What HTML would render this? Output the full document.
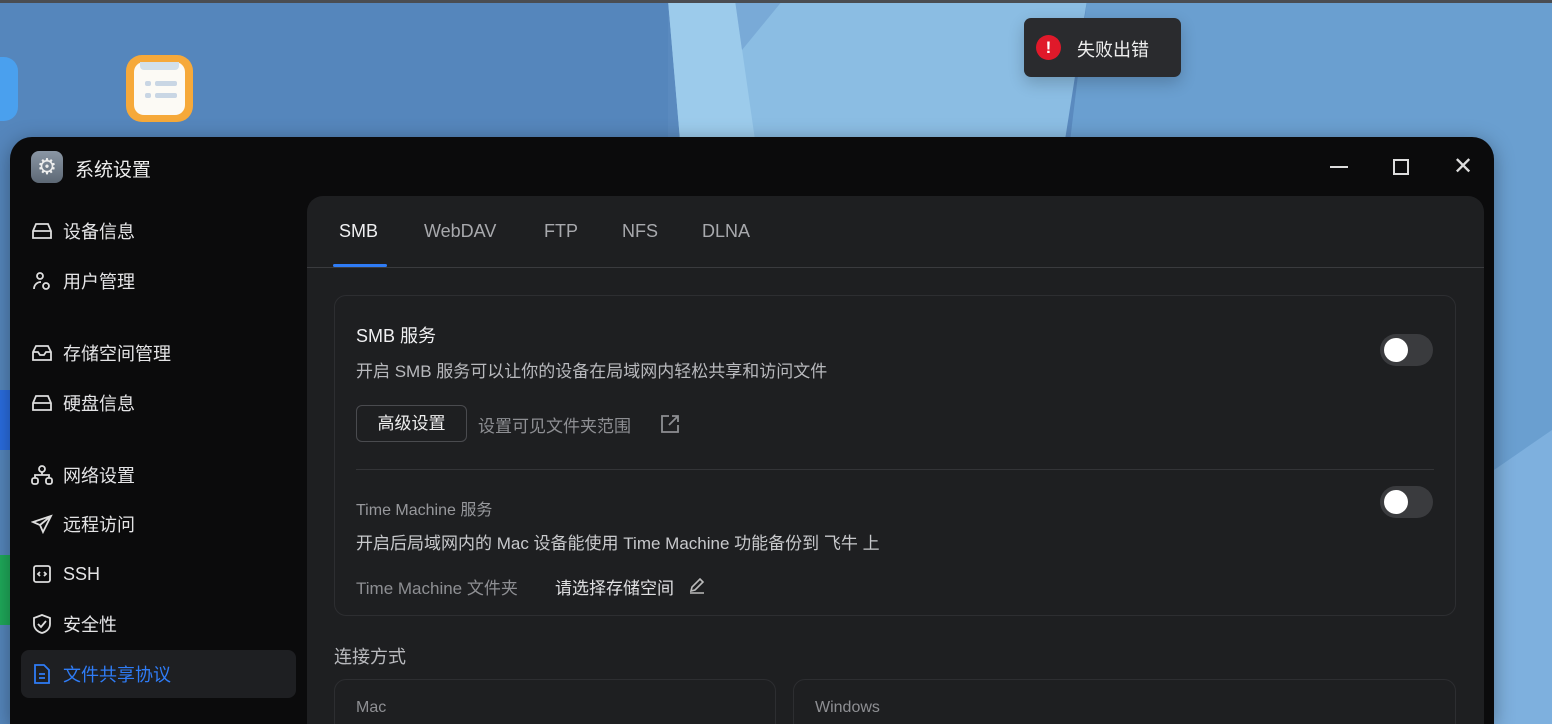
<!DOCTYPE html>
<html><head><meta charset="utf-8"><style>
*{margin:0;padding:0;box-sizing:border-box}
html,body{width:1552px;height:724px;overflow:hidden}
body{position:relative;font-family:"Liberation Sans","Noto Sans CJK SC",sans-serif;background:#5a88bb}
.abs{position:absolute}
.win{left:10px;top:137px;width:1484px;height:587px;background:#0b0b0c;border-radius:22px 22px 0 0;box-shadow:0 4px 20px rgba(0,0,0,.35)}
.nav{position:absolute;left:21px;height:48px;width:275px;display:flex;align-items:center;color:#e4e4e6;font-size:18px}
.nav svg{margin:0 10px 0 10px}
.panel{left:307px;top:196px;width:1177px;height:528px;background:#1e1f21;border-radius:16px 16px 0 0}
.tab{position:absolute;top:221px;font-size:18px;color:#a8a9ad}
.card{border:1px solid #2d2e31;border-radius:12px;background:#1e1f21}
.tog{width:53px;height:32px;border-radius:16px;background:#3a3b3e}
.tog::after{content:"";position:absolute;left:4px;top:4px;width:24px;height:24px;border-radius:50%;background:#fff}
.t{position:absolute;white-space:nowrap}
</style></head><body>
<svg class="abs" style="left:0;top:0" width="1552" height="724">
<rect width="1552" height="724" fill="#5a8abf"/>
<rect x="0" y="0" width="668" height="724" fill="#5586bc"/>
<path d="M1087 0 L1552 0 L1552 724 L1000 724 Z" fill="#6a9fd0"/>
<path d="M668 0 L1087 0 L1065 140 L680 140 Z" fill="#8bbde3"/>
<path d="M668 0 L735 0 L755 140 L680 140 Z" fill="#9ccbeb"/>
<path d="M735 0 L783 0 L742 50 Z" fill="#79aad7"/>
<path d="M1494 470 L1552 430 L1552 724 L1494 724Z" fill="#7eb0de"/>
<rect width="1552" height="3" fill="#4a4d52"/>
</svg>
<div class="abs" style="left:-20px;top:57px;width:38px;height:64px;border-radius:14px;background:#4aa0ee"></div>
<div class="abs" style="left:126px;top:55px;width:67px;height:67px;border-radius:16px;background:#f6a93a"></div>
<div class="abs" style="left:134px;top:62px;width:51px;height:53px;border-radius:10px;background:#fcfaf5"></div>
<div class="abs" style="left:140px;top:62px;width:39px;height:8px;background:#d3e0ea;border-radius:0 0 4px 4px"></div>
<div class="abs" style="left:145px;top:81px;width:6px;height:5px;background:#c9d6e4;border-radius:2px"></div>
<div class="abs" style="left:155px;top:81px;width:22px;height:5px;background:#c9d6e4;border-radius:2px"></div>
<div class="abs" style="left:145px;top:93px;width:6px;height:5px;background:#c9d6e4;border-radius:2px"></div>
<div class="abs" style="left:155px;top:93px;width:22px;height:5px;background:#c9d6e4;border-radius:2px"></div>
<div class="abs" style="left:0;top:390px;width:10px;height:60px;background:#2a6de0"></div>
<div class="abs" style="left:0;top:555px;width:10px;height:70px;background:#1faa5a"></div>

<div class="abs" style="left:1024px;top:18px;width:157px;height:59px;background:#2a2b2e;border-radius:7px;box-shadow:0 6px 16px rgba(0,0,0,.2)"></div>
<div class="abs" style="left:1036px;top:35px;width:25px;height:25px;border-radius:50%;background:#e0192a;color:#fff;font-weight:bold;font-size:17px;text-align:center;line-height:25px">!</div>
<div class="t" style="left:1077px;top:36px;font-size:18px;color:#eee">失败出错</div>

<div class="abs win"></div>
<div class="abs" style="left:31px;top:151px;width:32px;height:32px;border-radius:8px;background:linear-gradient(#8a96a4,#5d6875);color:#eee;font-size:22px;text-align:center;line-height:32px">⚙</div>
<div class="t" style="left:75px;top:155px;font-size:19px;color:#eee">系统设置</div>
<div class="abs" style="left:1330px;top:166px;width:18px;height:2px;background:#ddd"></div>
<div class="abs" style="left:1393px;top:159px;width:16px;height:16px;border:2px solid #ddd"></div>
<div class="t" style="left:1453px;top:152px;font-size:24px;color:#ddd">✕</div>

<div class="nav" style="top:207px"><svg width="22" height="20" fill="none" stroke="#ddd" stroke-width="1.8"><path d="M2 10 L5 3 H17 L20 10 V17 H2Z M2 10H20"/></svg>设备信息</div>
<div class="nav" style="top:257px"><svg width="22" height="20" fill="none" stroke="#ddd" stroke-width="1.8"><circle cx="9" cy="5" r="3"/><path d="M3 18c0-4 3-7 7-7"/><circle cx="15" cy="15" r="3"/></svg>用户管理</div>
<div class="nav" style="top:329px"><svg width="22" height="20" fill="none" stroke="#ddd" stroke-width="1.8"><path d="M2 9 L5 3 H17 L20 9 V17 H2Z M2 9H7 L9 12H13L15 9H20"/></svg>存储空间管理</div>
<div class="nav" style="top:379px"><svg width="22" height="20" fill="none" stroke="#ddd" stroke-width="1.8"><path d="M2 10 L5 3 H17 L20 10 V17 H2Z M2 10H20"/></svg>硬盘信息</div>
<div class="nav" style="top:451px"><svg width="22" height="20" fill="none" stroke="#ddd" stroke-width="1.8"><circle cx="11" cy="4" r="3"/><rect x="1" y="13" width="6" height="6" rx="2"/><rect x="15" y="13" width="6" height="6" rx="2"/><path d="M11 7V10M4 13V10H18V13"/></svg>网络设置</div>
<div class="nav" style="top:500px"><svg width="22" height="20" fill="none" stroke="#ddd" stroke-width="1.8"><path d="M20 2 L2 8 L9 11 L12 18Z M9 11 L20 2"/></svg>远程访问</div>
<div class="nav" style="top:550px"><svg width="22" height="20" fill="none" stroke="#ddd" stroke-width="1.8"><rect x="3" y="2" width="16" height="16" rx="2"/><path d="M9 8L7 10L9 12M13 8L15 10L13 12"/></svg>SSH</div>
<div class="nav" style="top:600px"><svg width="22" height="20" fill="none" stroke="#ddd" stroke-width="1.8"><path d="M11 1L19 4V10C19 15 15 18 11 19C7 18 3 15 3 10V4Z"/><path d="M7 10L10 13L15 7"/></svg>安全性</div>
<div class="nav" style="top:650px;background:#1e1f22;border-radius:8px;color:#2f7cf6"><svg width="22" height="20" fill="none" stroke="#2f7cf6" stroke-width="1.8"><path d="M4 1H13L18 6V19H4Z M8 10H14M8 14H14"/></svg>文件共享协议</div>

<div class="abs panel"></div>
<div class="tab" style="left:339px;color:#f0f0f2">SMB</div>
<div class="tab" style="left:424px">WebDAV</div>
<div class="tab" style="left:544px">FTP</div>
<div class="tab" style="left:622px">NFS</div>
<div class="tab" style="left:702px">DLNA</div>
<div class="abs" style="left:307px;top:267px;width:1177px;height:1px;background:#3a3b3e"></div>
<div class="abs" style="left:333px;top:264px;width:54px;height:3px;background:#2f7cf6;border-radius:2px"></div>

<div class="abs card" style="left:334px;top:295px;width:1122px;height:321px"></div>
<div class="t" style="left:356px;top:322px;font-size:18px;color:#f0f0f2">SMB 服务</div>
<div class="t" style="left:356px;top:357px;font-size:17px;color:#b8b9bd">开启 SMB 服务可以让你的设备在局域网内轻松共享和访问文件</div>
<div class="abs tog" style="left:1380px;top:334px"></div>
<div class="abs" style="left:356px;top:405px;width:111px;height:37px;border:1px solid #4a4b4f;border-radius:6px;color:#eee;font-size:17px;text-align:center;line-height:35px">高级设置</div>
<div class="t" style="left:478px;top:412px;font-size:17px;color:#8e8f93">设置可见文件夹范围</div>
<svg class="abs" style="left:660px;top:414px" width="20" height="20" fill="none" stroke="#8e8f93" stroke-width="1.8"><path d="M9 2H2V18H18V11M12 2H18V8M18 2L9 11"/></svg>
<div class="abs" style="left:356px;top:469px;width:1078px;height:1px;background:#333437"></div>
<div class="t" style="left:356px;top:496px;font-size:16px;color:#97989c">Time Machine 服务</div>
<div class="abs tog" style="left:1380px;top:486px"></div>
<div class="t" style="left:356px;top:529px;font-size:17px;color:#c8c9cc">开启后局域网内的 Mac 设备能使用 Time Machine 功能备份到 飞牛 上</div>
<div class="t" style="left:356px;top:574px;font-size:17px;color:#8e8f93">Time Machine 文件夹</div>
<div class="t" style="left:555px;top:574px;font-size:17px;color:#e0e0e2">请选择存储空间</div>
<svg class="abs" style="left:688px;top:576px" width="18" height="18" fill="none" stroke="#bbb" stroke-width="1.6"><path d="M3 15L4 11L12 3L15 6L7 14Z M2 17H16"/></svg>

<div class="t" style="left:334px;top:643px;font-size:18px;color:#b8b9bd">连接方式</div>
<div class="abs card" style="left:334px;top:679px;width:442px;height:60px"></div>
<div class="abs card" style="left:793px;top:679px;width:663px;height:60px"></div>
<div class="t" style="left:356px;top:699px;font-size:16px;color:#8e8f93">Mac</div>
<div class="t" style="left:815px;top:699px;font-size:16px;color:#8e8f93">Windows</div>
</body></html>
